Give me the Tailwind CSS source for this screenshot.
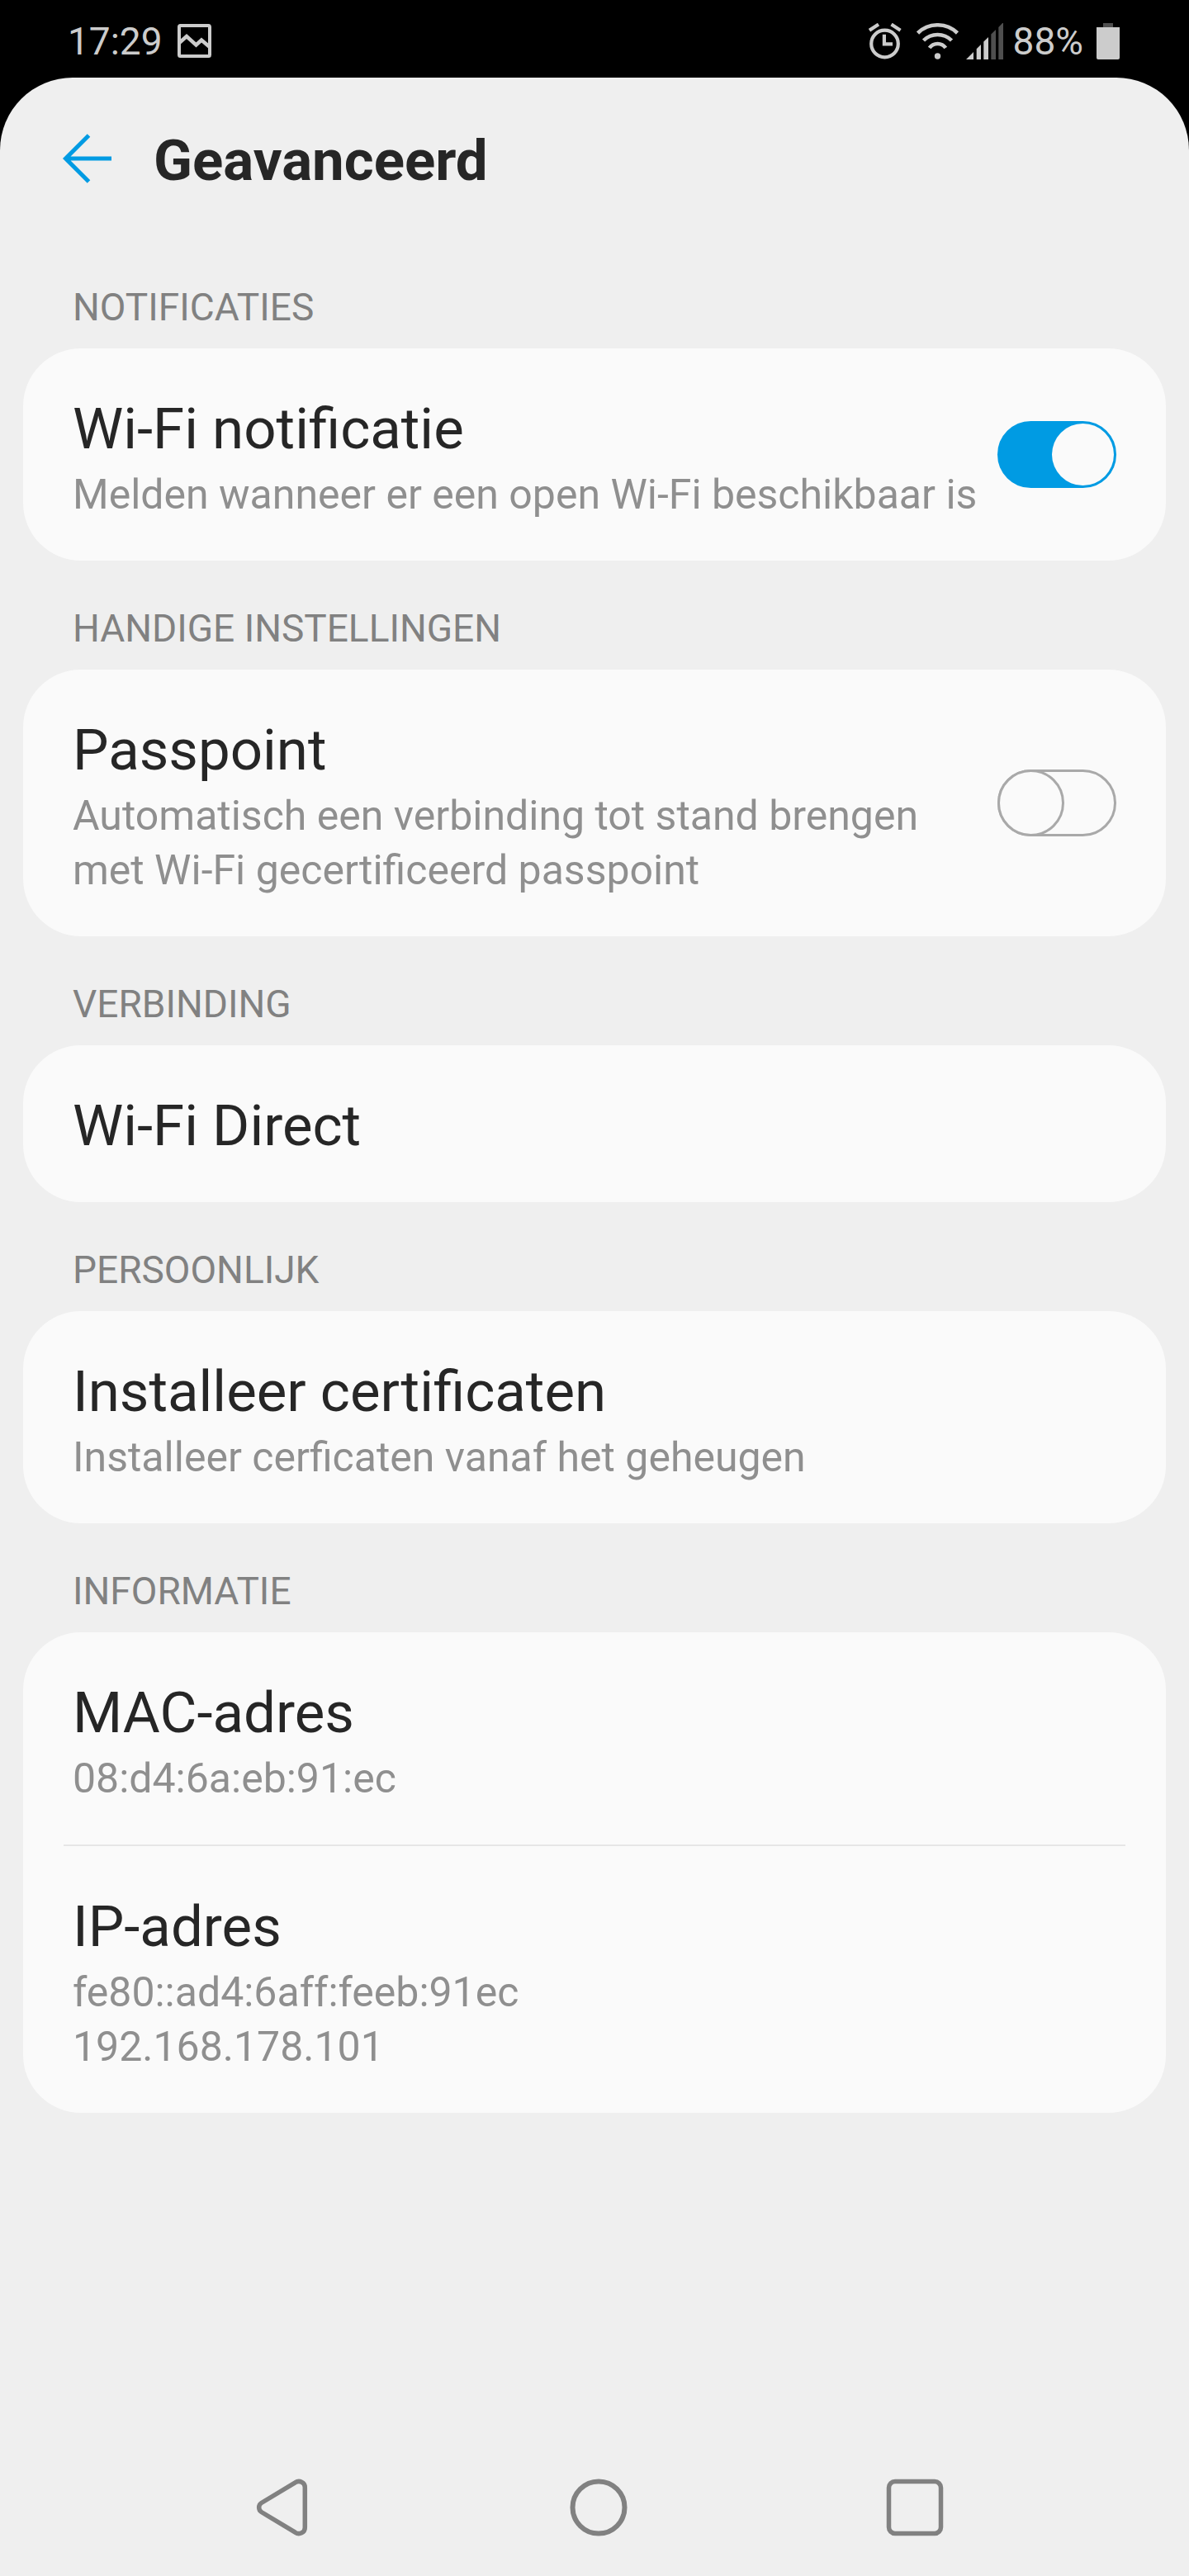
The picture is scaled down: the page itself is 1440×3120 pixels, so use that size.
<!DOCTYPE html>
<html lang="nl">
<head>
<meta charset="utf-8">
<meta name="viewport" content="width=device-width, initial-scale=1">
<title>Geavanceerd</title>
<script src="https://cdn.jsdelivr.net/npm/@tailwindcss/browser@4"></script>
</head>
<body class="bg-black font-['Roboto',sans-serif] text-[#262626]">
<div class="flex min-h-screen flex-col">

  <!-- Status bar -->
  <div class="flex h-[94px] shrink-0 items-center justify-between pr-[84px] pl-[82px] pt-[5px] text-[46px] leading-[54px] text-[#cccccc]">
    <div class="flex items-center gap-[18px]">
      <span>17:29</span>
      <svg class="h-[42px] w-[42px]" viewBox="0 0 42 42" fill="none" stroke="#cccccc" stroke-width="4" aria-hidden="true">
        <rect x="2" y="2" width="37" height="37" rx="1.5"/>
        <path d="M2 23 L11 15 L22.500 25.500 L29 19.500 L39 28" stroke-width="4.500"/>
      </svg>
    </div>
    <div class="flex items-center">
      <svg class="mr-[18px] h-11 w-10" viewBox="0 0 40 44" fill="none" stroke="#cccccc" stroke-width="4.200" aria-hidden="true">
        <circle cx="19.500" cy="25" r="16.300"/>
        <path d="M18.900 13.700 V25.300 H29"/>
        <path d="M1 8.700 L12 1.500 M27.500 1.500 L38.500 8.700"/>
      </svg>
      <svg class="mr-2 h-11 w-[52px]" viewBox="0 0 52 44" fill="none" stroke="#cccccc" stroke-width="4.600" aria-hidden="true">
        <path d="M1.500 12 A34.500 34.500 0 0 1 49.500 12"/>
        <path d="M8.500 21 A24 24 0 0 1 42.500 21"/>
        <path d="M15.700 30 A12 12 0 0 1 35.300 30"/>
        <circle cx="25.500" cy="40" r="3.700" fill="#cccccc" stroke="none"/>
      </svg>
      <svg class="mr-3 h-11 w-[45px]" viewBox="0 0 45 44" fill="#cccccc" aria-hidden="true">
        <path d="M0 44 L9 35 V44 Z M12.700 44 V31.300 L18 26 V44 Z M21.300 44 V22.500 L27 17 V44 Z"/>
        <path d="M30.300 44 V13.500 L36 8 V44 Z M39.300 44 V5 L45 -1 V44 Z" fill="#4f4f4f"/>
      </svg>
      <span class="mr-4">88%</span>
      <svg class="h-11 w-7" viewBox="0 0 28 44" aria-hidden="true">
        <rect x="8" width="12" height="6" fill="#4f4f4f"/>
        <path d="M0 5 H28 V42 Q28 44 26 44 H2 Q0 44 0 42 Z" fill="#cccccc"/>
      </svg>
    </div>
  </div>

  <div class="flex flex-1 flex-col rounded-t-[88px] bg-[#efefef]">
    <header class="flex items-center gap-[49px] px-[77px] pt-[60px] pb-[54px]">
      <button type="button" aria-label="Terug" class="h-[60px] w-[60px]">
        <svg class="h-[60px] w-[60px] overflow-visible" viewBox="0 0 60 60" fill="none" stroke="#009be3" stroke-width="5" aria-hidden="true">
          <path d="M58 27 H3 M30.500 -1 L2.500 27 L30.500 55"/>
        </svg>
      </button>
      <h1 class="text-[69px] leading-[82px] font-bold">Geavanceerd</h1>
    </header>

    <main class="px-7">
      <section>
        <h2 class="px-[60px] pt-[55px] pb-[23px] text-[46px] leading-[54px] text-[#818181]">NOTIFICATIES</h2>
        <label for="wifi-notify" class="flex items-center gap-5 rounded-[70px] bg-[#fafafa] px-[60px]">
          <span class="block min-w-0 flex-1 pt-[52px] pb-[47px]">
            <span class="block text-[69px] leading-[92px]">Wi-Fi notificatie</span>
            <span class="block text-[50px] leading-[66px] text-[#8f8f8f]">Melden wanneer er een open Wi-Fi beschikbaar is</span>
          </span>
          <input id="wifi-notify" type="checkbox" role="switch" checked class="flex h-[81px] w-[144px] shrink-0 appearance-none items-center rounded-full border-[3px] border-[#a9a9a9] before:block before:size-[81px] before:-ml-[3px] before:shrink-0 before:rounded-full before:border-[3px] before:border-[#a9a9a9] before:bg-[#fafafa] checked:justify-end checked:border-[#009be3] checked:bg-[#009be3] checked:before:m-0 checked:before:size-[75px] checked:before:border-0">
        </label>
      </section>

      <section>
        <h2 class="px-[60px] pt-[55px] pb-[23px] text-[46px] leading-[54px] text-[#818181]">HANDIGE INSTELLINGEN</h2>
        <label for="passpoint" class="flex items-center gap-5 rounded-[70px] bg-[#fafafa] px-[60px]">
          <span class="block min-w-0 flex-1 pt-[52px] pb-[47px]">
            <span class="block text-[69px] leading-[92px]">Passpoint</span>
            <span class="block text-[50px] leading-[66px] text-[#8f8f8f]">Automatisch een verbinding tot stand brengen met Wi-Fi gecertificeerd passpoint</span>
          </span>
          <input id="passpoint" type="checkbox" role="switch" class="flex h-[81px] w-[144px] shrink-0 appearance-none items-center rounded-full border-[3px] border-[#a9a9a9] before:block before:size-[81px] before:-ml-[3px] before:shrink-0 before:rounded-full before:border-[3px] before:border-[#a9a9a9] before:bg-[#fafafa] checked:justify-end checked:border-[#009be3] checked:bg-[#009be3] checked:before:m-0 checked:before:size-[75px] checked:before:border-0">
        </label>
      </section>

      <section>
        <h2 class="px-[60px] pt-[55px] pb-[23px] text-[46px] leading-[54px] text-[#818181]">VERBINDING</h2>
        <a href="#wifi-direct" class="block rounded-[70px] bg-[#fafafa] px-[60px] pt-[52px] pb-[46px] text-[69px] leading-[92px]">Wi-Fi Direct</a>
      </section>

      <section>
        <h2 class="px-[60px] pt-[55px] pb-[23px] text-[46px] leading-[54px] text-[#818181]">PERSOONLIJK</h2>
        <a href="#certificaten" class="block rounded-[70px] bg-[#fafafa] px-[60px] pt-[52px] pb-[47px]">
          <span class="block text-[69px] leading-[92px]">Installeer certificaten</span>
          <span class="block text-[50px] leading-[66px] text-[#8f8f8f]">Installeer cerficaten vanaf het geheugen</span>
        </a>
      </section>

      <section>
        <h2 class="px-[60px] pt-[55px] pb-[23px] text-[46px] leading-[54px] text-[#818181]">INFORMATIE</h2>
        <dl class="rounded-[70px] bg-[#fafafa] px-[49px]">
          <div class="px-[11px] pt-[52px] pb-[47px]">
            <dt class="text-[69px] leading-[92px]">MAC-adres</dt>
            <dd class="text-[50px] leading-[66px] text-[#8f8f8f]">08:d4:6a:eb:91:ec</dd>
          </div>
          <div class="border-t-2 border-[#e6e6e6] px-[11px] pt-[52px] pb-[47px]">
            <dt class="text-[69px] leading-[92px]">IP-adres</dt>
            <dd class="text-[50px] leading-[66px] text-[#8f8f8f]">fe80::ad4:6aff:feeb:91ec</dd>
            <dd class="text-[50px] leading-[66px] text-[#8f8f8f]">192.168.178.101</dd>
          </div>
        </dl>
      </section>
    </main>

    <!-- System navigation -->
    <nav class="mt-auto flex justify-between pt-12 pr-[297px] pb-12 pl-[307px]" aria-label="Systeemnavigatie">
      <button type="button" aria-label="Vorige" class="size-[70px]">
        <svg class="size-[70px]" viewBox="0 0 70 70" fill="none" stroke="#818181" stroke-width="5.500" aria-hidden="true">
          <path d="M50.500 4.800 L9.600 29.500 C5.700 32 5.700 38 9.600 40.500 L50.500 65.200 C55.500 68.500 62.300 65.500 62.300 59.500 V10.500 C62.300 4.500 55.500 1.500 50.500 4.800 Z"/>
        </svg>
      </button>
      <button type="button" aria-label="Startscherm" class="size-[70px]">
        <svg class="size-[70px]" viewBox="0 0 70 70" fill="none" stroke="#818181" stroke-width="6" aria-hidden="true">
          <circle cx="35" cy="35" r="31.500"/>
        </svg>
      </button>
      <button type="button" aria-label="Recente apps" class="size-[70px]">
        <svg class="size-[70px]" viewBox="0 0 70 70" fill="none" stroke="#818181" stroke-width="5.500" aria-hidden="true">
          <rect x="3.500" y="3.500" width="63" height="63" rx="7.500"/>
        </svg>
      </button>
    </nav>
  </div>
</div>
</body>
</html>
